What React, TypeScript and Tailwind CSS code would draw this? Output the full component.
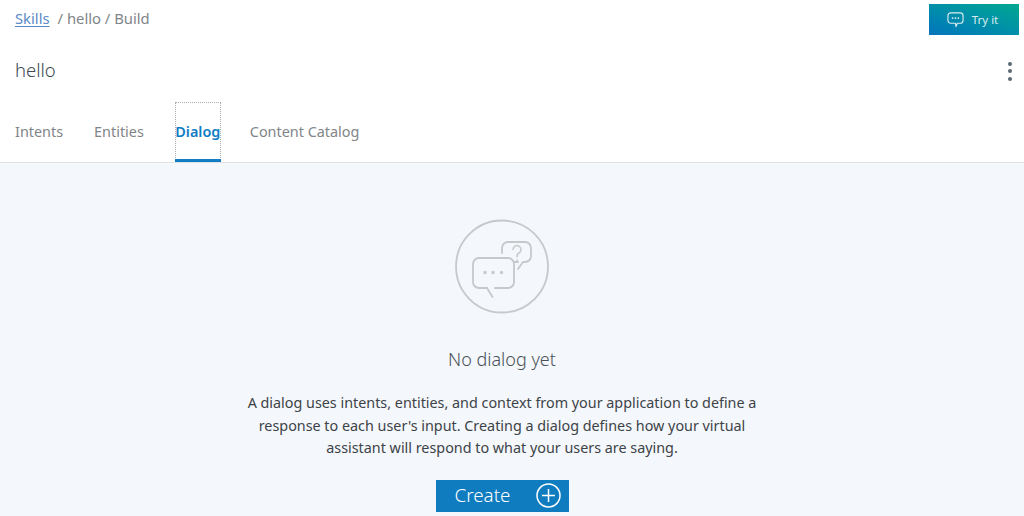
export default function App() {
  return (
    <div className="flex h-[516px] w-[1024px] flex-col overflow-hidden bg-[#f4f7fb] font-['Noto_Sans',sans-serif]">
      <header className="h-[163px] shrink-0 border-b border-[#dfe3e6] bg-white">
        <div className="flex h-[38px] items-start justify-between pl-[15px] pr-[5px]">
          <div className="flex pt-[7px] text-[14.800px] leading-[22px] text-[#7f8589]">
            <a className="text-[#5a8ac6] underline underline-offset-2">Skills</a>
            <span className="ml-[8px]">/ hello / Build</span>
          </div>
          <button className="mt-[4px] flex h-[31px] w-[90px] items-center justify-center gap-[8px] bg-gradient-to-tr from-[#0a74bd] to-[#00a78f] pr-[3px] text-[11.500px] text-[#dcecf2]">
            <svg width="17" height="17" viewBox="0 0 18 18" fill="none" stroke="currentColor" strokeWidth="1.200" strokeLinecap="round" strokeLinejoin="round">
              <path d="M4 2h10a3 3 0 0 1 3 3v5a3 3 0 0 1-3 3h-3l-1.500 3.500-.5-3.500H4a3 3 0 0 1-3-3V5a3 3 0 0 1 3-3z" />
              <circle cx="6" cy="7.500" r=".4" fill="currentColor" />
              <circle cx="9" cy="7.500" r=".4" fill="currentColor" />
              <circle cx="12" cy="7.500" r=".4" fill="currentColor" />
            </svg>
            Try it
          </button>
        </div>
        <div className="flex h-[63px] items-center justify-between pl-[15px] pr-[12px]">
          <h1 className="text-[18.500px] font-light text-[#3d4a52]">hello</h1>
          <div className="flex flex-col gap-[3.500px] pt-[3px]">
            <span className="h-[4px] w-[4px] rounded-full bg-[#5a6872]" />
            <span className="h-[4px] w-[4px] rounded-full bg-[#5a6872]" />
            <span className="h-[4px] w-[4px] rounded-full bg-[#5a6872]" />
          </div>
        </div>
        <nav className="flex h-[61px] items-stretch pl-[15px] text-[14.400px] text-[#7f8589]">
          <a className="flex items-center">Intents</a>
          <a className="ml-[31px] flex items-center">Entities</a>
          <a className="relative ml-[31px] mt-[1px] flex w-[46px] items-center justify-center border border-dotted border-[#a8acb0] pb-[1px] font-semibold text-[#0f7cc4]">
            Dialog
            <span className="absolute inset-x-[-1px] bottom-[-1px] h-[3px] bg-[#0f7cc4]" />
          </a>
          <a className="ml-[29px] flex items-center">Content Catalog</a>
        </nav>
      </header>
      <main className="flex flex-col items-center">
        <div className="mr-[20px] flex w-[558px] flex-col items-center">
          <svg className="mt-[56px]" width="96" height="96" viewBox="0 0 96 96" fill="none" stroke="#c6c8ca" strokeWidth="1.800" strokeLinecap="round" strokeLinejoin="round">
            <circle cx="48" cy="47.500" r="46" />
            <g transform="translate(1 0)">
              <path d="M47 34v-5a6 6 0 0 1 6-6h17a6 6 0 0 1 6 6v8a6 6 0 0 1-6 6h-2l-5 7M59 43h4" />
              <path d="M32 69h-8a6 6 0 0 1-6-6V45a6 6 0 0 1 6-6h29a6 6 0 0 1 6 6v18a6 6 0 0 1-6 6H40M32 69l5.500 9" />
              <circle cx="30" cy="53.500" r=".8" fill="#c6c8ca" />
              <circle cx="38" cy="53.500" r=".8" fill="#c6c8ca" />
              <circle cx="46.500" cy="53.500" r=".8" fill="#c6c8ca" />
              <path d="M58 30.500a4 4 0 1 1 6 3.500c-1.200.7-2 1.400-2 3v.8M62 41v.5" strokeWidth="1.500" />
            </g>
          </svg>
          <h2 className="mt-[31px] text-[18px] font-light leading-[26px] text-[#4a5258]">No dialog yet</h2>
          <p className="mt-[20px] whitespace-nowrap text-center text-[14.350px] leading-[22.500px] text-[#3d4348]">
            A dialog uses intents, entities, and context from your application to define a<br />
            response to each user's input. Creating a dialog defines how your virtual<br />
            assistant will respond to what your users are saying.
          </p>
          <button className="mt-[20px] flex h-[32px] w-[133px] items-center justify-between bg-[#0f7cc0] pb-[1px] pl-[19px] pr-[8px] text-[18.800px] font-light text-white">
            Create
            <svg width="25" height="25" viewBox="0 0 25 25" fill="none" stroke="currentColor" strokeWidth="1.500">
              <circle cx="12.500" cy="12.500" r="11.500" />
              <path d="M12.500 6v13M6 12.500h13" />
            </svg>
          </button>
        </div>
      </main>
    </div>
  );
}
